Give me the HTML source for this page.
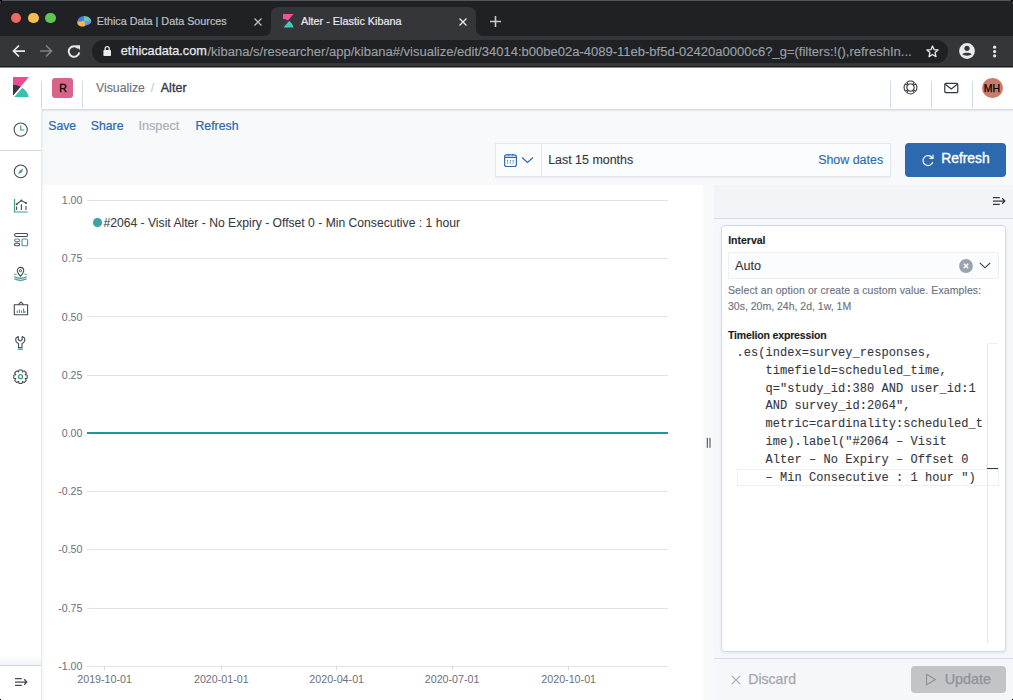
<!DOCTYPE html>
<html><head><meta charset="utf-8"><style>
html,body{margin:0;padding:0;width:1013px;height:700px;overflow:hidden;background:#fff;}
body{position:relative;font-family:"Liberation Sans",sans-serif;}
.r{position:absolute;display:block;}
.t{position:absolute;white-space:pre;line-height:1;font-family:"Liberation Sans",sans-serif;-webkit-text-stroke:0.12px currentColor;}
.n{-webkit-text-stroke:0 !important;}
</style></head><body>
<div class="r" style="left:0px;top:0px;width:1013px;height:36px;background:#202124;"></div>
<div class="r" style="left:0px;top:0px;width:1013px;height:1px;background:#55565a;"></div>
<div class="r" style="left:0px;top:0px;width:2px;height:2px;background:#000;"></div>
<div class="r" style="left:1011px;top:0px;width:2px;height:2px;background:#000;"></div>
<div class="r" style="left:0px;top:1px;width:1px;height:3px;background:#3a3b3e;"></div>
<div class="r" style="left:1012px;top:1px;width:1px;height:3px;background:#3a3b3e;"></div>
<div class="r" style="left:0px;top:36px;width:1013px;height:30px;background:#35363a;"></div>
<div class="r" style="left:0px;top:66px;width:1013px;height:1px;background:#1b1c1f;"></div>
<div class="r" style="left:0px;top:67px;width:1013px;height:1px;background:#8a8b8e;"></div>
<div class="r" style="left:11.0px;top:12.8px;width:10.4px;height:10.4px;border-radius:50%;background:#ec6a5e"></div>
<div class="r" style="left:28.3px;top:12.8px;width:10.4px;height:10.4px;border-radius:50%;background:#f4bf4f"></div>
<div class="r" style="left:45.4px;top:12.8px;width:10.4px;height:10.4px;border-radius:50%;background:#61c554"></div>
<svg class="r" style="left:76px;top:14px;" width="16" height="14" viewBox="0 0 16 14"><defs><clipPath id="bc"><path d="M1.3 9 C1 5 4 2 8.5 1.9 C12.5 2 15.2 4.5 15.2 7.3 C15.2 9.8 12.5 10.8 9.8 11.5 L7.5 12.4 C4 12.9 1.6 11.5 1.3 9Z"/></clipPath></defs><g clip-path="url(#bc)"><rect x="0" y="0" width="8.5" height="7.2" fill="#3f80ee"/><rect x="8" y="0" width="9" height="7.6" fill="#5ccab0"/><rect x="8" y="7" width="9" height="7" fill="#7b8cf2"/><path d="M0 7.2 H6 L7 6.6 L8.2 7.4 L9.2 8.6 L8.6 9.8 L9 11 L8 14 H0Z" fill="#f6b750"/></g></svg>
<div class="t" style="left:96.74px;top:15.96px;font-size:10.8px;color:#bdc1c6;-webkit-text-stroke:0.2px #bdc1c6;">Ethica Data | Data Sources</div>
<svg class="r" style="left:254px;top:17.5px;" width="8" height="8" viewBox="0 0 8 8"><path d="M0.5 0.5 L7.5 7.5 M7.5 0.5 L0.5 7.5" stroke="#bdc1c6" stroke-width="1.3"/></svg>
<svg class="r" style="left:263px;top:7px;" width="222" height="29" viewBox="0 0 222 29"><path d="M0 29 Q8 29 8 21 L8 8 Q8 0 16 0 L205 0 Q213 0 213 8 L213 21 Q213 29 221 29 Z" fill="#35363a"/></svg>
<svg class="r" style="left:283px;top:14.3px;" width="10.6" height="13.6" viewBox="4 0 25 32"><path fill="#f5509a" d="M4 0v28.789L28.935.017z"/><path fill="#343741" d="M4 12v16.789l11.906-13.738A24.721 24.721 0 0 0 4 12"/><path fill="#40cdb9" d="M18.479 16.664L6.268 30.754l-.999 1.152h23.58c-1.254-6.724-5.158-12.05-10.37-15.242"/></svg>
<div class="t" style="left:300.94px;top:15.71px;font-size:10.85px;color:#e8eaed;-webkit-text-stroke:0.2px #e8eaed;">Alter - Elastic Kibana</div>
<svg class="r" style="left:458.5px;top:17.5px;" width="8" height="8" viewBox="0 0 8 8"><path d="M0.5 0.5 L7.5 7.5 M7.5 0.5 L0.5 7.5" stroke="#e8eaed" stroke-width="1.3"/></svg>
<svg class="r" style="left:489.5px;top:15.8px;" width="11" height="11" viewBox="0 0 11 11"><path d="M5.5 0 V11 M0 5.5 H11" stroke="#c8cacd" stroke-width="1.6"/></svg>
<svg class="r" style="left:12px;top:44px;" width="14" height="14" viewBox="0 0 14 14"><path d="M13 7 H1.5 M7 1.5 L1.5 7 L7 12.5" stroke="#e8eaed" stroke-width="1.75" fill="none"/></svg>
<svg class="r" style="left:38.6px;top:44px;" width="14" height="14" viewBox="0 0 14 14"><path d="M1 7 H12.5 M7 1.5 L12.5 7 L7 12.5" stroke="#7d8085" stroke-width="1.7" fill="none"/></svg>
<svg class="r" style="left:66.5px;top:44px;" width="14" height="14" viewBox="0 0 14 14"><path d="M11.3 4.3 A5.3 5.3 0 1 0 12.3 8.3" stroke="#e8eaed" stroke-width="1.9" fill="none"/><path d="M8.2 1.2 L13 1.2 L13 6 Z" fill="#e8eaed"/></svg>
<div class="r" style="left:92px;top:40px;width:856px;height:23px;background:#202124;border-radius:11.5px;"></div>
<svg class="r" style="left:103px;top:45px;" width="10" height="12" viewBox="0 0 10 12"><rect x="0.4" y="5" width="7.6" height="6" rx="0.8" fill="#e8eaed"/><path d="M2.2 5.5 V3.6 A2 2 0 0 1 6.2 3.6 V5.5" stroke="#e8eaed" stroke-width="1.3" fill="none"/></svg>
<div class="t" style="left:120.81px;top:45.05px;font-size:12.7px;color:#e8eaed;-webkit-text-stroke:0.25px #e8eaed;">ethicadata.com</div>
<div class="t" style="left:207.49px;top:44.77px;font-size:13.03px;color:#9aa0a6;-webkit-text-stroke:0.15px #9aa0a6;">/kibana/s/researcher/app/kibana#/visualize/edit/34014:b00be02a-4089-11eb-bf5d-02420a0000c6?_g=(filters:!(),refreshIn...</div>
<svg class="r" style="left:926px;top:45px;" width="13" height="13" viewBox="0 0 13 13"><path d="M6.5 1 L8.1 4.7 L12.1 5 L9.1 7.6 L10 11.6 L6.5 9.5 L3 11.6 L3.9 7.6 L0.9 5 L4.9 4.7 Z" stroke="#e8eaed" stroke-width="1.3" fill="none" stroke-linejoin="round"/></svg>
<svg class="r" style="left:959px;top:43.2px;" width="16" height="16" viewBox="0 0 16 16"><circle cx="8" cy="8" r="7.9" fill="#e8eaed"/><circle cx="8" cy="5.3" r="2.6" fill="#35363a"/><path d="M3.4 11.3 C4.4 9.3 11.6 9.3 12.6 11.3 C11.4 13.1 4.6 13.1 3.4 11.3Z" fill="#35363a"/></svg>
<svg class="r" style="left:991px;top:44px;" width="8" height="15" viewBox="0 0 8 15"><circle cx="3.6" cy="3.2" r="1.6" fill="#e8eaed"/><circle cx="3.6" cy="7.5" r="1.6" fill="#e8eaed"/><circle cx="3.6" cy="11.8" r="1.6" fill="#e8eaed"/></svg>
<div class="r" style="left:0px;top:68px;width:1013px;height:41px;background:#ffffff;"></div>
<div class="r" style="left:0px;top:108.6px;width:1013px;height:1px;background:#d4dae5;"></div>
<svg class="r" style="left:13px;top:76.6px;" width="16" height="20.5" viewBox="4 0 25 32"><path fill="#ee4b97" d="M4 0v28.789L28.935.017z"/><path fill="#353740" d="M4 12v16.789l11.906-13.738A24.721 24.721 0 0 0 4 12"/><path fill="#3dbeb0" d="M18.479 16.664L6.268 30.754l-.999 1.152h23.58c-1.254-6.724-5.158-12.05-10.37-15.242"/></svg>
<div class="r" style="left:41px;top:81px;width:1px;height:27px;background:#d4dae5;"></div>
<div class="r" style="left:82px;top:81px;width:1px;height:27px;background:#d4dae5;"></div>
<div class="r" style="left:890px;top:81px;width:1px;height:27px;background:#d4dae5;"></div>
<div class="r" style="left:931px;top:81px;width:1px;height:27px;background:#d4dae5;"></div>
<div class="r" style="left:972px;top:81px;width:1px;height:27px;background:#d4dae5;"></div>
<div class="r" style="left:52px;top:78px;width:21px;height:20px;background:#d6648b;border-radius:3px;"></div>
<div class="t" style="left:59.26px;top:82.62px;font-size:10.6px;color:#000;-webkit-text-stroke:0.3px #000;">R</div>
<div class="t" style="left:96.04px;top:82.03px;font-size:12.25px;color:#6a707c;">Visualize</div>
<div class="t" style="left:150.74px;top:82.03px;font-size:12.25px;color:#c5cad2;">/</div>
<div class="t" style="left:160.63px;top:81.90px;font-size:12.4px;color:#353740;letter-spacing:0.15px;-webkit-text-stroke:0.35px #353740;">Alter</div>
<svg class="r" style="left:902.7px;top:80.3px;" width="15" height="15" viewBox="0 0 15 15"><path d="M12.60 3.80 A6.3 6.3 0 0 1 12.60 11.20 L10.41 9.62 A3.6 3.6 0 0 0 10.41 5.38 Z M11.20 12.60 A6.3 6.3 0 0 1 3.80 12.60 L5.38 10.41 A3.6 3.6 0 0 0 9.62 10.41 Z M2.40 11.20 A6.3 6.3 0 0 1 2.40 3.80 L4.59 5.38 A3.6 3.6 0 0 0 4.59 9.62 Z M3.80 2.40 A6.3 6.3 0 0 1 11.20 2.40 L9.62 4.59 A3.6 3.6 0 0 0 5.38 4.59 Z " stroke="#353740" stroke-width="1.05" fill="none" stroke-linejoin="round"/></svg>
<svg class="r" style="left:943px;top:82px;" width="17" height="13" viewBox="0 0 17 13"><rect x="1.8" y="1.4" width="13" height="9.3" rx="1.3" stroke="#353740" stroke-width="1.2" fill="none"/><path d="M2.3 2.2 L8.3 7 L14.3 2.2" stroke="#353740" stroke-width="1.1" fill="none"/></svg>
<div class="r" style="left:982.2px;top:77.7px;width:20.6px;height:20.6px;border-radius:50%;background:#c97c6b"></div>
<div class="t" style="left:983.76px;top:82.61px;font-size:10.5px;color:#000000;-webkit-text-stroke:0.25px #000;">MH</div>
<div class="r" style="left:0px;top:109px;width:41px;height:591px;background:#ffffff;"></div>
<div class="r" style="left:41px;top:109px;width:1px;height:591px;background:#e5e8ed;"></div>
<div class="r" style="left:0px;top:150px;width:41px;height:1px;background:#d4dae5;"></div>
<svg class="r" style="left:13px;top:122px;" width="16" height="16" viewBox="0 0 16 16"><circle cx="7.7" cy="7.6" r="6.6" stroke="#474a54" stroke-width="1.1" fill="none"/><path d="M7.7 3.6 V8 H11.2" stroke="#3f9c8f" stroke-width="1.2" fill="none"/></svg>
<svg class="r" style="left:13px;top:164px;" width="16" height="16" viewBox="0 0 16 16"><circle cx="7.7" cy="7.4" r="6.4" stroke="#474a54" stroke-width="1.1" fill="none"/><path d="M10.3 4.6 L8.6 8.4 L5 10.3 L6.8 6.4 Z" fill="#3f9c8f"/></svg>
<svg class="r" style="left:13px;top:198px;" width="16" height="16" viewBox="0 0 16 16"><path d="M1.5 1 V14 H14.5" stroke="#3f9c8f" stroke-width="1.2" fill="none"/><path d="M3.8 6 L8.3 2.6 L13 5" stroke="#474a54" stroke-width="1.1" fill="none"/><circle cx="3.6" cy="6.2" r="1" fill="#474a54"/><circle cx="8.3" cy="2.6" r="1" fill="#474a54"/><circle cx="13" cy="5" r="1" fill="#474a54"/><path d="M3.6 8.5 V12 M8.4 6.2 V12 M13 8 V12" stroke="#474a54" stroke-width="1.1"/></svg>
<svg class="r" style="left:13px;top:232px;" width="16" height="16" viewBox="0 0 16 16"><rect x="1.6" y="1.5" width="13" height="3" rx="1.5" stroke="#474a54" stroke-width="1.1" fill="none"/><rect x="1.6" y="7" width="5" height="2.6" rx="1.3" stroke="#3f9c8f" stroke-width="1.1" fill="none"/><rect x="1.6" y="11.2" width="5" height="2.6" rx="1.3" stroke="#474a54" stroke-width="1.1" fill="none"/><rect x="9" y="7" width="5.6" height="6.8" rx="1.3" stroke="#3f9c8f" stroke-width="1.1" fill="none"/></svg>
<svg class="r" style="left:13px;top:266px;" width="16" height="16" viewBox="0 0 16 16"><path d="M7.5 10.5 C5.5 8.2 4.3 6.6 4.3 4.6 A3.2 3.2 0 0 1 10.7 4.6 C10.7 6.6 9.5 8.2 7.5 10.5Z" stroke="#474a54" stroke-width="1.1" fill="none"/><circle cx="7.5" cy="4.7" r="1.1" stroke="#474a54" stroke-width="1" fill="none"/><path d="M1.3 8.5 L3.6 8 M11.4 8 L13.7 8.5 M1.3 10.8 Q7.5 13.8 13.7 10.8 M1.3 12.8 Q7.5 15.8 13.7 12.8" stroke="#3f9c8f" stroke-width="1.2" fill="none"/></svg>
<svg class="r" style="left:13px;top:301px;" width="16" height="16" viewBox="0 0 16 16"><path d="M1.3 3.8 H14.6 V13.8 H1.3 Z" stroke="#474a54" stroke-width="1.1" fill="none"/><path d="M5 3.8 L7.9 1 L10.8 3.8" stroke="#474a54" stroke-width="1.1" fill="none"/><path d="M4.3 12 V9.5 M6.4 12 V8.6 M8.5 12 V9.5 M10.6 12 V7.6 M12 12 V10" stroke="#3f9c8f" stroke-width="1.1"/></svg>
<svg class="r" style="left:13px;top:335px;" width="16" height="16" viewBox="0 0 16 16"><path d="M5.3 1.5 C3.2 2.3 2.3 4.3 3 6.2 C3.5 7.4 4.6 8.2 5.5 8.6 V12.5 H9 V8.6 C9.9 8.2 11 7.4 11.5 6.2 C12.2 4.3 11.3 2.3 9.2 1.5 V4.8 L7.25 6 L5.3 4.8 Z" stroke="#474a54" stroke-width="1.1" fill="none" stroke-linejoin="round"/><path d="M4.8 14.2 H9.8" stroke="#3f9c8f" stroke-width="1.4"/></svg>
<svg class="r" style="left:13px;top:369px;" width="16" height="16" viewBox="0 0 16 16"><path d="M12.25 5.58 L14.23 6.19 L14.23 9.21 L12.25 9.82 L12.36 9.56 L13.33 11.40 L11.20 13.53 L9.36 12.56 L9.62 12.45 L9.01 14.43 L5.99 14.43 L5.38 12.45 L5.64 12.56 L3.80 13.53 L1.67 11.40 L2.64 9.56 L2.75 9.82 L0.77 9.21 L0.77 6.19 L2.75 5.58 L2.64 5.84 L1.67 4.00 L3.80 1.87 L5.64 2.84 L5.38 2.95 L5.99 0.97 L9.01 0.97 L9.62 2.95 L9.36 2.84 L11.20 1.87 L13.33 4.00 L12.36 5.84 Z" stroke="#474a54" stroke-width="1.1" fill="none" stroke-linejoin="round"/><circle cx="7.5" cy="7.7" r="2" stroke="#3f9c8f" stroke-width="1.3" fill="none"/></svg>
<div class="r" style="left:0px;top:655px;width:41px;height:10px;background:linear-gradient(rgba(211,218,230,0),rgba(211,218,230,0.3));"></div>
<div class="r" style="left:0px;top:665px;width:41px;height:1px;background:#d4dae5;"></div>
<svg class="r" style="left:12.9px;top:676.4px;" width="17" height="12" viewBox="0 0 17 12"><path d="M2 2.6 H8.8 M2 6 H13.6 M2 9.4 H8.8 M11.2 3.3 L13.8 6 L11.2 8.7" stroke="#474a54" stroke-width="1.25" fill="none"/></svg>
<div class="r" style="left:42px;top:109.6px;width:971px;height:75.4px;background:#f8f9fb;"></div>
<div class="r" style="left:42px;top:109.6px;width:971px;height:2.4px;background:linear-gradient(rgba(152,162,179,0.22),rgba(152,162,179,0));"></div>
<div class="t" style="left:48.24px;top:119.63px;font-size:12.25px;color:#2d69af;-webkit-text-stroke:0.22px #2d69af;">Save</div>
<div class="t" style="left:90.84px;top:119.63px;font-size:12.25px;color:#2d69af;-webkit-text-stroke:0.22px #2d69af;">Share</div>
<div class="t" style="left:138.51px;top:120.29px;font-size:12.65px;color:#adb0b6;-webkit-text-stroke:0.22px #adb0b6;">Inspect</div>
<div class="t" style="left:195.44px;top:119.59px;font-size:12.3px;color:#2d69af;-webkit-text-stroke:0.22px #2d69af;">Refresh</div>
<div class="r" style="left:495px;top:143px;width:396px;height:34px;background:#fbfcfd;border:1px solid #e4e8ee;box-sizing:border-box;box-shadow:0 1px 1px rgba(152,162,179,0.15);"></div>
<div class="r" style="left:541px;top:144px;width:1px;height:32px;background:#e4e8ee;"></div>
<svg class="r" style="left:503px;top:153px;" width="15" height="15" viewBox="0 0 15 15"><rect x="1.6" y="1.8" width="11.8" height="11.7" rx="2" stroke="#2d69af" stroke-width="1.15" fill="none"/><path d="M1.6 4.4 H13.4 M5.3 0.9 V2.6 M9.5 0.9 V2.6" stroke="#2d69af" stroke-width="1.15"/><path d="M4.5 7.2 V10.6 M7.4 7.2 V10.6 M10.1 7.2 V10.6" stroke="#2d69af" stroke-width="1.05" stroke-dasharray="1.2 1"/></svg>
<svg class="r" style="left:521px;top:155.8px;" width="13" height="8" viewBox="0 0 13 8"><path d="M1 1.5 L6.5 6.5 L12 1.5" stroke="#2d69af" stroke-width="1.2" fill="none"/></svg>
<div class="t" style="left:548.13px;top:153.66px;font-size:12.45px;color:#353740;">Last 15 months</div>
<div class="t" style="left:818.13px;top:153.66px;font-size:12.45px;color:#2d69af;">Show dates</div>
<div class="r" style="left:905px;top:143px;width:101px;height:34px;background:#2d69af;border-radius:4px;"></div>
<svg class="r" style="left:921px;top:153px;" width="14" height="14" viewBox="0 0 14 14"><path d="M11.3 5 A5 5 0 1 0 11.8 9" stroke="#ffffff" stroke-width="1.15" fill="none"/><path d="M12 1.8 V5.3 H8.5" stroke="#ffffff" stroke-width="1.15" fill="none"/></svg>
<div class="t" style="left:941.13px;top:152.33px;font-size:13.9px;color:#ffffff;-webkit-text-stroke:0.35px #fff;">Refresh</div>
<div class="r" style="left:42px;top:185px;width:661.4px;height:515px;background:#ffffff;"></div>
<div class="r" style="left:703.4px;top:185px;width:10.6px;height:515px;background:#f8f9fb;"></div>
<div class="r" style="left:87px;top:199.5px;width:581px;height:1px;background:#e2e3e5;"></div>
<div class="t n" style="right:930.6px;top:195.12px;font-size:10.6px;color:#6a707c;">1.00</div>
<div class="r" style="left:87px;top:257.5px;width:581px;height:1px;background:#e2e3e5;"></div>
<div class="t n" style="right:930.6px;top:253.35px;font-size:10.6px;color:#6a707c;">0.75</div>
<div class="r" style="left:87px;top:315.5px;width:581px;height:1px;background:#e2e3e5;"></div>
<div class="t n" style="right:930.6px;top:311.57px;font-size:10.6px;color:#6a707c;">0.50</div>
<div class="r" style="left:87px;top:374.5px;width:581px;height:1px;background:#e2e3e5;"></div>
<div class="t n" style="right:930.6px;top:369.80px;font-size:10.6px;color:#6a707c;">0.25</div>
<div class="t n" style="right:930.6px;top:428.02px;font-size:10.6px;color:#6a707c;">0.00</div>
<div class="r" style="left:87px;top:490.5px;width:581px;height:1px;background:#e2e3e5;"></div>
<div class="t n" style="right:930.6px;top:486.25px;font-size:10.6px;color:#6a707c;">-0.25</div>
<div class="r" style="left:87px;top:548.5px;width:581px;height:1px;background:#e2e3e5;"></div>
<div class="t n" style="right:930.6px;top:544.47px;font-size:10.6px;color:#6a707c;">-0.50</div>
<div class="r" style="left:87px;top:607.5px;width:581px;height:1px;background:#e2e3e5;"></div>
<div class="t n" style="right:930.6px;top:602.70px;font-size:10.6px;color:#6a707c;">-0.75</div>
<div class="r" style="left:87px;top:665.5px;width:581px;height:1px;background:#e2e3e5;"></div>
<div class="t n" style="right:930.6px;top:660.92px;font-size:10.6px;color:#6a707c;">-1.00</div>
<div class="r" style="left:87px;top:431.6px;width:581px;height:2.5px;background:#1b989b;"></div>
<div class="r" style="left:104.1px;top:666px;width:1px;height:4px;background:#d4dae5;"></div>
<div class="t n" style="left:64.6px;width:80px;text-align:center;top:674.04px;font-size:10.7px;color:#6a707c;">2019-10-01</div>
<div class="r" style="left:220.8px;top:666px;width:1px;height:4px;background:#d4dae5;"></div>
<div class="t n" style="left:181.3px;width:80px;text-align:center;top:674.04px;font-size:10.7px;color:#6a707c;">2020-01-01</div>
<div class="r" style="left:336.2px;top:666px;width:1px;height:4px;background:#d4dae5;"></div>
<div class="t n" style="left:296.7px;width:80px;text-align:center;top:674.04px;font-size:10.7px;color:#6a707c;">2020-04-01</div>
<div class="r" style="left:451.6px;top:666px;width:1px;height:4px;background:#d4dae5;"></div>
<div class="t n" style="left:412.1px;width:80px;text-align:center;top:674.04px;font-size:10.7px;color:#6a707c;">2020-07-01</div>
<div class="r" style="left:568.2px;top:666px;width:1px;height:4px;background:#d4dae5;"></div>
<div class="t n" style="left:528.7px;width:80px;text-align:center;top:674.04px;font-size:10.7px;color:#6a707c;">2020-10-01</div>
<div class="r" style="left:93.1px;top:218.1px;width:8.6px;height:8.6px;border-radius:50%;background:#3aa3a3"></div>
<div class="t" style="left:103.45px;top:217.01px;font-size:12.15px;color:#353740;-webkit-text-stroke:0.05px #353740;">#2064 - Visit Alter - No Expiry - Offset 0 - Min Consecutive : 1 hour</div>
<svg class="r" style="left:705px;top:437px;" width="7" height="12" viewBox="0 0 7 12"><path d="M2.3 0.8 V10.8 M5 0.8 V10.8" stroke="#353740" stroke-width="0.95"/></svg>
<div class="r" style="left:714px;top:185px;width:299px;height:515px;background:#f5f7fa;"></div>
<div class="r" style="left:714px;top:185px;width:299px;height:33px;background:#f2f4f8;"></div>
<div class="r" style="left:714px;top:218px;width:299px;height:1px;background:#d4dae5;"></div>
<svg class="r" style="left:991.2px;top:195.2px;" width="17" height="12" viewBox="0 0 17 12"><path d="M2 2.6 H8.8 M2 6 H13.6 M2 9.4 H8.8 M11.2 3.3 L13.8 6 L11.2 8.7" stroke="#353740" stroke-width="1.25" fill="none"/></svg>
<div class="r" style="left:720.6px;top:225.4px;width:285px;height:426.2px;background:#ffffff;border:1px solid #d4dae5;box-sizing:border-box;border-radius:4px;box-shadow:0 1px 3px rgba(152,162,179,0.2);"></div>
<div class="t" style="left:728.16px;top:235.41px;font-size:10.5px;color:#1a1c21;font-weight:700;">Interval</div>
<div class="r" style="left:728px;top:252px;width:270.5px;height:27px;background:#fbfcfd;border:1px solid #edeff4;box-sizing:border-box;border-radius:2px;"></div>
<div class="t" style="left:735.01px;top:260.35px;font-size:12.7px;color:#353740;">Auto</div>
<svg class="r" style="left:959px;top:258.8px;" width="14" height="14" viewBox="0 0 14 14"><circle cx="7" cy="7" r="6.9" fill="#9aa2b1"/><path d="M4.8 4.8 L9.2 9.2 M9.2 4.8 L4.8 9.2" stroke="#fff" stroke-width="1.5"/></svg>
<svg class="r" style="left:978.5px;top:262px;" width="12" height="7" viewBox="0 0 12 7"><path d="M0.8 0.8 L6 5.8 L11.2 0.8" stroke="#353740" stroke-width="1.1" fill="none"/></svg>
<div class="t" style="left:727.97px;top:285.01px;font-size:10.5px;color:#6a707c;letter-spacing:0.1px;">Select an option or create a custom value. Examples:</div>
<div class="t" style="left:727.97px;top:300.61px;font-size:10.5px;color:#6a707c;">30s, 20m, 24h, 2d, 1w, 1M</div>
<div class="t" style="left:727.97px;top:329.51px;font-size:10.5px;color:#1a1c21;font-weight:700;letter-spacing:-0.15px;">Timelion expression</div>
<div class="r" style="left:987px;top:343px;width:1px;height:300px;background:#e4e6e9;"></div>
<div class="r" style="left:987px;top:343px;width:11px;height:1px;background:#eef0f3;"></div>
<div class="r" style="left:987px;top:467.5px;width:11px;height:1.2px;background:#353740;"></div>
<div class="r" style="left:737px;top:468.6px;width:261.5px;height:17.6px;background:transparent;border:1px solid #eceff3;box-sizing:border-box;"></div>
<div class="t" style="left:736.4px;top:346.74px;font-family:'Liberation Mono',monospace;font-size:12px;letter-spacing:0.05px;color:#353740;-webkit-text-stroke:0.1px #353740;">.es(index=survey_responses,</div>
<div class="t" style="left:736.4px;top:364.62px;font-family:'Liberation Mono',monospace;font-size:12px;letter-spacing:0.05px;color:#353740;-webkit-text-stroke:0.1px #353740;">    timefield=scheduled_time,</div>
<div class="t" style="left:736.4px;top:382.50px;font-family:'Liberation Mono',monospace;font-size:12px;letter-spacing:0.05px;color:#353740;-webkit-text-stroke:0.1px #353740;">    q="study_id:380 AND user_id:1</div>
<div class="t" style="left:736.4px;top:400.38px;font-family:'Liberation Mono',monospace;font-size:12px;letter-spacing:0.05px;color:#353740;-webkit-text-stroke:0.1px #353740;">    AND survey_id:2064",</div>
<div class="t" style="left:736.4px;top:418.26px;font-family:'Liberation Mono',monospace;font-size:12px;letter-spacing:0.05px;color:#353740;-webkit-text-stroke:0.1px #353740;">    metric=cardinality:scheduled_t</div>
<div class="t" style="left:736.4px;top:436.14px;font-family:'Liberation Mono',monospace;font-size:12px;letter-spacing:0.05px;color:#353740;-webkit-text-stroke:0.1px #353740;">    ime).label("#2064 – Visit</div>
<div class="t" style="left:736.4px;top:454.02px;font-family:'Liberation Mono',monospace;font-size:12px;letter-spacing:0.05px;color:#353740;-webkit-text-stroke:0.1px #353740;">    Alter – No Expiry – Offset 0</div>
<div class="t" style="left:736.4px;top:471.90px;font-family:'Liberation Mono',monospace;font-size:12px;letter-spacing:0.05px;color:#353740;-webkit-text-stroke:0.1px #353740;">    – Min Consecutive : 1 hour ")</div>
<div class="r" style="left:714px;top:658px;width:299px;height:1px;background:#d4dae5;"></div>
<svg class="r" style="left:730.5px;top:674.5px;" width="10" height="10" viewBox="0 0 10 10"><path d="M0.8 0.8 L9.2 9.2 M9.2 0.8 L0.8 9.2" stroke="#a4a7ad" stroke-width="1.1"/></svg>
<div class="t" style="left:748.21px;top:671.86px;font-size:14.1px;color:#a5a8ad;-webkit-text-stroke:0.25px #a5a8ad;">Discard</div>
<div class="r" style="left:910.7px;top:666px;width:95px;height:26.6px;background:#c3c4c7;border-radius:4px;"></div>
<svg class="r" style="left:924.5px;top:673px;" width="12" height="13" viewBox="0 0 12 13"><path d="M1.5 1.2 L10.5 6.5 L1.5 11.8 Z" stroke="#8e9196" stroke-width="1.1" fill="none" stroke-linejoin="round"/></svg>
<div class="t" style="left:944.69px;top:671.81px;font-size:14.4px;color:#8e9196;-webkit-text-stroke:0.25px #8e9196;">Update</div>
<div class="r" style="left:42px;top:109.6px;width:3px;height:590.4px;background:linear-gradient(90deg,rgba(120,130,150,0.07),rgba(120,130,150,0));"></div>
<div class="r" style="left:0px;top:698.5px;width:1px;height:1.5px;background:#000;"></div>
<div class="r" style="left:1012px;top:698.5px;width:1px;height:1.5px;background:#000;"></div>
</body></html>
